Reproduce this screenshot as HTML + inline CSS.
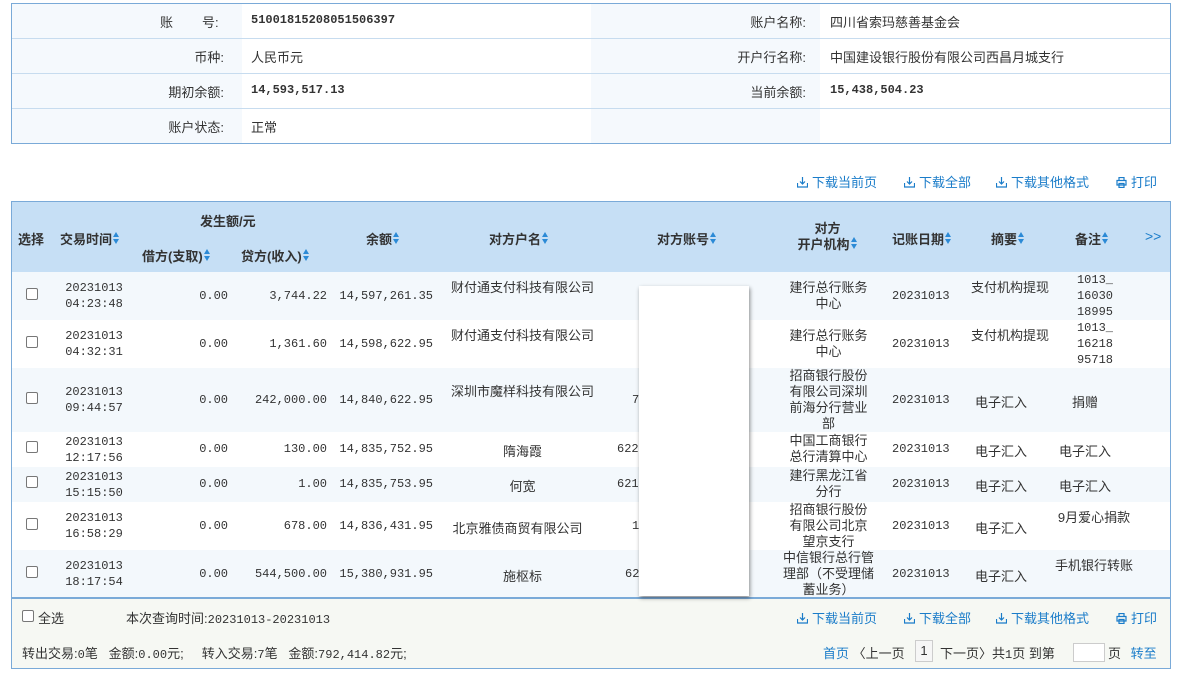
<!DOCTYPE html>
<html><head><meta charset="utf-8"><style>
*{margin:0;padding:0;box-sizing:border-box}
body{width:1181px;height:676px;background:#fff;position:relative;overflow:hidden;font-family:"Liberation Sans","Noto Sans CJK SC",sans-serif;font-size:13px;color:#333}
.a{position:absolute;white-space:nowrap}
.m{font-family:"Liberation Mono","Noto Sans CJK SC",monospace;font-size:12px}
.b{font-weight:bold}
.lk{color:#1a7cc9}
.c{text-align:center}
.r{text-align:right}
.ar{display:inline-block;width:7px;height:14px;vertical-align:-2px;margin-left:1px;position:relative}
.ar:before{content:"";position:absolute;left:0;top:0;border:3.5px solid transparent;border-bottom:5px solid #2b8ad6;border-top:0}
.ar:after{content:"";position:absolute;left:0;top:7px;border:3.5px solid transparent;border-top:5px solid #2b8ad6;border-bottom:0}
.cb{position:absolute;width:12px;height:12px;border:1px solid #777;border-radius:2px;background:#fff}
.ic{display:inline-block;width:11px;height:11px;vertical-align:-1px;margin-right:4px}
.t2{line-height:16px}
</style></head><body>
<!-- info box -->
<div class="a" style="left:11px;top:3px;width:1160px;height:141px;border:1px solid #7aaad8;background:#f5f9fd"></div>
<div class="a" style="left:242px;top:4px;width:349px;height:139px;background:#fff"></div>
<div class="a" style="left:820px;top:4px;width:350px;height:139px;background:#fff"></div>
<div class="a" style="left:12px;top:38px;width:1158px;height:1px;background:#c7dcef"></div>
<div class="a" style="left:12px;top:73px;width:1158px;height:1px;background:#c7dcef"></div>
<div class="a" style="left:12px;top:108px;width:1158px;height:1px;background:#c7dcef"></div>
<div class="a" style="left:160px;top:12px">账</div><div class="a" style="left:202px;top:12px">号:</div>
<div class="a m b" style="left:251px;top:13px">51001815208051506397</div>
<div class="a r" style="left:100px;width:124px;top:47px">币种:</div>
<div class="a" style="left:251px;top:47px">人民币元</div>
<div class="a r" style="left:100px;width:124px;top:82px">期初余额:</div>
<div class="a m b" style="left:251px;top:83px">14,593,517.13</div>
<div class="a r" style="left:100px;width:124px;top:117px">账户状态:</div>
<div class="a" style="left:251px;top:117px">正常</div>
<div class="a r" style="left:680px;width:126px;top:12px">账户名称:</div>
<div class="a" style="left:830px;top:12px">四川省索玛慈善基金会</div>
<div class="a r" style="left:680px;width:126px;top:47px">开户行名称:</div>
<div class="a" style="left:830px;top:47px">中国建设银行股份有限公司西昌月城支行</div>
<div class="a r" style="left:680px;width:126px;top:82px">当前余额:</div>
<div class="a m b" style="left:830px;top:83px">15,438,504.23</div>

<!-- toolbar -->
<div class="a lk" style="left:797px;top:172px"><svg class="ic" viewBox="0 0 11 11"><path d="M5.5 0v7M3 4.5l2.5 2.5 2.5-2.5M0.5 6v4h10v-4" fill="none" stroke="#1a7cc9" stroke-width="1.2"/></svg>下载当前页</div>
<div class="a lk" style="left:904px;top:172px"><svg class="ic" viewBox="0 0 11 11"><path d="M5.5 0v7M3 4.5l2.5 2.5 2.5-2.5M0.5 6v4h10v-4" fill="none" stroke="#1a7cc9" stroke-width="1.2"/></svg>下载全部</div>
<div class="a lk" style="left:996px;top:172px"><svg class="ic" viewBox="0 0 11 11"><path d="M5.5 0v7M3 4.5l2.5 2.5 2.5-2.5M0.5 6v4h10v-4" fill="none" stroke="#1a7cc9" stroke-width="1.2"/></svg>下载其他格式</div>
<div class="a lk" style="left:1116px;top:172px"><svg class="ic" viewBox="0 0 11 11"><path d="M3 3.5V.5h5v3M1 3.5h9v4.5H1zM3 6.5h5v4H3z" fill="none" stroke="#1a7cc9" stroke-width="1.2"/></svg>打印</div>

<!-- table -->
<div class="a" style="left:11px;top:201px;width:1160px;height:468px;border:1px solid #7aaad8;background:#fff"></div>
<div class="a" style="left:12px;top:202px;width:1158px;height:70px;background:#c6dff5"></div>
<div class="a" style="left:12px;top:272px;width:1158px;height:48px;background:#f3f8fc"></div>
<div class="a" style="left:12px;top:368px;width:1158px;height:64px;background:#f3f8fc"></div>
<div class="a" style="left:12px;top:467px;width:1158px;height:35px;background:#f3f8fc"></div>
<div class="a" style="left:12px;top:550px;width:1158px;height:48px;background:#f3f8fc"></div>
<div class="a" style="left:12px;top:597px;width:1158px;height:2px;background:#7aaad8"></div>
<div class="a" style="left:12px;top:599px;width:1158px;height:69px;background:#f6f8f3"></div>

<div class="a b" style="left:18px;top:229px">选择</div>
<div class="a b" style="left:60px;top:229px">交易时间<span class="ar"></span></div>
<div class="a b" style="left:200px;top:211px">发生额/元</div>
<div class="a b" style="left:142px;top:246px">借方(支取)<span class="ar"></span></div>
<div class="a b" style="left:241px;top:246px">贷方(收入)<span class="ar"></span></div>
<div class="a b" style="left:366px;top:229px">余额<span class="ar"></span></div>
<div class="a b" style="left:489px;top:229px">对方户名<span class="ar"></span></div>
<div class="a b" style="left:657px;top:229px">对方账号<span class="ar"></span></div>
<div class="a b c t2" style="left:790px;top:221px;width:75px">对方<br>开户机构<span class="ar"></span></div>
<div class="a b" style="left:892px;top:229px">记账日期<span class="ar"></span></div>
<div class="a b" style="left:991px;top:229px">摘要<span class="ar"></span></div>
<div class="a b" style="left:1075px;top:229px">备注<span class="ar"></span></div>
<div class="a lk" style="left:1145px;top:228px;font-size:14px">&gt;&gt;</div>

<!-- rows -->
<div id="rows"></div>
<!-- row 1 -->
<div class="cb" style="left:26px;top:288px"></div>
<div class="a m c t2" style="left:55px;width:78px;top:280px">20231013<br>04:23:48</div>
<div class="a m r" style="left:150px;width:78px;top:289px">0.00</div>
<div class="a m r" style="left:240px;width:87px;top:289px">3,744.22</div>
<div class="a m r" style="left:330px;width:103px;top:289px">14,597,261.35</div>
<div class="a c t2" style="left:450px;width:145px;top:280px;white-space:normal">财付通支付科技有限公司</div>
<div class="a c t2" style="left:785px;width:87px;top:280px;white-space:normal">建行总行账务中心</div>
<div class="a m" style="left:892px;top:289px">20231013</div>
<div class="a c t2" style="left:970px;width:80px;top:280px;white-space:normal">支付机构提现</div>
<div class="a m t2" style="left:1070px;top:272px;width:50px;white-space:normal;text-align:center">1013_<br>16030<br>18995</div>
<!-- row 2 -->
<div class="cb" style="left:26px;top:336px"></div>
<div class="a m c t2" style="left:55px;width:78px;top:328px">20231013<br>04:32:31</div>
<div class="a m r" style="left:150px;width:78px;top:337px">0.00</div>
<div class="a m r" style="left:240px;width:87px;top:337px">1,361.60</div>
<div class="a m r" style="left:330px;width:103px;top:337px">14,598,622.95</div>
<div class="a c t2" style="left:450px;width:145px;top:328px;white-space:normal">财付通支付科技有限公司</div>
<div class="a c t2" style="left:785px;width:87px;top:328px;white-space:normal">建行总行账务中心</div>
<div class="a m" style="left:892px;top:337px">20231013</div>
<div class="a c t2" style="left:970px;width:80px;top:328px;white-space:normal">支付机构提现</div>
<div class="a m t2" style="left:1070px;top:320px;width:50px;text-align:center">1013_<br>16218<br>95718</div>
<!-- row 3 -->
<div class="cb" style="left:26px;top:392px"></div>
<div class="a m c t2" style="left:55px;width:78px;top:384px">20231013<br>09:44:57</div>
<div class="a m r" style="left:150px;width:78px;top:393px">0.00</div>
<div class="a m r" style="left:240px;width:87px;top:393px">242,000.00</div>
<div class="a m r" style="left:330px;width:103px;top:393px">14,840,622.95</div>
<div class="a c t2" style="left:450px;width:145px;top:384px;white-space:normal">深圳市魔样科技有限公司</div>
<div class="a m" style="left:632px;top:393px">7</div>
<div class="a c t2" style="left:785px;width:87px;top:368px;white-space:normal">招商银行股份有限公司深圳前海分行营业部</div>
<div class="a m" style="left:892px;top:393px">20231013</div>
<div class="a" style="left:975px;top:392px">电子汇入</div>
<div class="a" style="left:1072px;top:392px">捐赠</div>
<!-- row 4 -->
<div class="cb" style="left:26px;top:441px"></div>
<div class="a m c t2" style="left:55px;width:78px;top:434px">20231013<br>12:17:56</div>
<div class="a m r" style="left:150px;width:78px;top:442px">0.00</div>
<div class="a m r" style="left:240px;width:87px;top:442px">130.00</div>
<div class="a m r" style="left:330px;width:103px;top:442px">14,835,752.95</div>
<div class="a c" style="left:450px;width:145px;top:441px">隋海霞</div>
<div class="a m" style="left:617px;top:442px">622</div>
<div class="a c t2" style="left:785px;width:87px;top:433px;white-space:normal">中国工商银行总行清算中心</div>
<div class="a m" style="left:892px;top:442px">20231013</div>
<div class="a" style="left:975px;top:441px">电子汇入</div>
<div class="a" style="left:1059px;top:441px">电子汇入</div>
<!-- row 5 -->
<div class="cb" style="left:26px;top:476px"></div>
<div class="a m c t2" style="left:55px;width:78px;top:469px">20231013<br>15:15:50</div>
<div class="a m r" style="left:150px;width:78px;top:477px">0.00</div>
<div class="a m r" style="left:240px;width:87px;top:477px">1.00</div>
<div class="a m r" style="left:330px;width:103px;top:477px">14,835,753.95</div>
<div class="a c" style="left:450px;width:145px;top:476px">何宽</div>
<div class="a m" style="left:617px;top:477px">621</div>
<div class="a c t2" style="left:785px;width:87px;top:468px;white-space:normal">建行黑龙江省分行</div>
<div class="a m" style="left:892px;top:477px">20231013</div>
<div class="a" style="left:975px;top:476px">电子汇入</div>
<div class="a" style="left:1059px;top:476px">电子汇入</div>
<!-- row 6 -->
<div class="cb" style="left:26px;top:518px"></div>
<div class="a m c t2" style="left:55px;width:78px;top:510px">20231013<br>16:58:29</div>
<div class="a m r" style="left:150px;width:78px;top:519px">0.00</div>
<div class="a m r" style="left:240px;width:87px;top:519px">678.00</div>
<div class="a m r" style="left:330px;width:103px;top:519px">14,836,431.95</div>
<div class="a c" style="left:440px;width:155px;top:518px">北京雅债商贸有限公司</div>
<div class="a m" style="left:632px;top:519px">1</div>
<div class="a c t2" style="left:785px;width:87px;top:502px;white-space:normal">招商银行股份有限公司北京望京支行</div>
<div class="a m" style="left:892px;top:519px">20231013</div>
<div class="a" style="left:975px;top:518px">电子汇入</div>
<div class="a c t2" style="left:1055px;width:78px;top:510px;white-space:normal">9月爱心捐款</div>
<!-- row 7 -->
<div class="cb" style="left:26px;top:566px"></div>
<div class="a m c t2" style="left:55px;width:78px;top:558px">20231013<br>18:17:54</div>
<div class="a m r" style="left:150px;width:78px;top:567px">0.00</div>
<div class="a m r" style="left:240px;width:87px;top:567px">544,500.00</div>
<div class="a m r" style="left:330px;width:103px;top:567px">15,380,931.95</div>
<div class="a c" style="left:450px;width:145px;top:566px">施枢标</div>
<div class="a m" style="left:625px;top:567px">62</div>
<div class="a c t2" style="left:780px;width:97px;top:550px;white-space:normal">中信银行总行管理部（不受理储蓄业务）</div>
<div class="a m" style="left:892px;top:567px">20231013</div>
<div class="a" style="left:975px;top:566px">电子汇入</div>
<div class="a c t2" style="left:1055px;width:78px;top:558px;white-space:normal">手机银行转账</div>

<!-- overlay -->
<div class="a" style="left:639px;top:286px;width:110px;height:310px;background:#fff;box-shadow:1px 2px 4px rgba(0,0,0,.45)"></div>

<!-- footer -->
<div class="cb" style="left:22px;top:610px"></div>
<div class="a" style="left:38px;top:608px">全选</div>
<div class="a" style="left:126px;top:608px">本次查询时间:<span class="m">20231013-20231013</span></div>
<div class="a lk" style="left:797px;top:608px"><svg class="ic" viewBox="0 0 11 11"><path d="M5.5 0v7M3 4.5l2.5 2.5 2.5-2.5M0.5 6v4h10v-4" fill="none" stroke="#1a7cc9" stroke-width="1.2"/></svg>下载当前页</div>
<div class="a lk" style="left:904px;top:608px"><svg class="ic" viewBox="0 0 11 11"><path d="M5.5 0v7M3 4.5l2.5 2.5 2.5-2.5M0.5 6v4h10v-4" fill="none" stroke="#1a7cc9" stroke-width="1.2"/></svg>下载全部</div>
<div class="a lk" style="left:996px;top:608px"><svg class="ic" viewBox="0 0 11 11"><path d="M5.5 0v7M3 4.5l2.5 2.5 2.5-2.5M0.5 6v4h10v-4" fill="none" stroke="#1a7cc9" stroke-width="1.2"/></svg>下载其他格式</div>
<div class="a lk" style="left:1116px;top:608px"><svg class="ic" viewBox="0 0 11 11"><path d="M3 3.5V.5h5v3M1 3.5h9v4.5H1zM3 6.5h5v4H3z" fill="none" stroke="#1a7cc9" stroke-width="1.2"/></svg>打印</div>
<div class="a" style="left:22px;top:643px">转出交易:<span class="m">0</span>笔 &nbsp; 金额:<span class="m">0.00</span>元; &nbsp; &nbsp; 转入交易:<span class="m">7</span>笔 &nbsp; 金额:<span class="m">792,414.82</span>元;</div>
<div class="a" style="left:823px;top:643px"><span class="lk">首页</span> 〈上一页</div>
<div class="a" style="left:915px;top:640px;width:18px;height:22px;border:1px solid #ccc;background:#f6f6f6;text-align:center;line-height:20px" class="m">1</div>
<div class="a" style="left:940px;top:643px">下一页〉共<span class="m">1</span>页 到第</div>
<div class="a" style="left:1073px;top:643px;width:32px;height:19px;border:1px solid #ccc;background:#fff"></div>
<div class="a" style="left:1108px;top:643px">页 <span class="lk" style="margin-left:6px">转至</span></div>
</body></html>
